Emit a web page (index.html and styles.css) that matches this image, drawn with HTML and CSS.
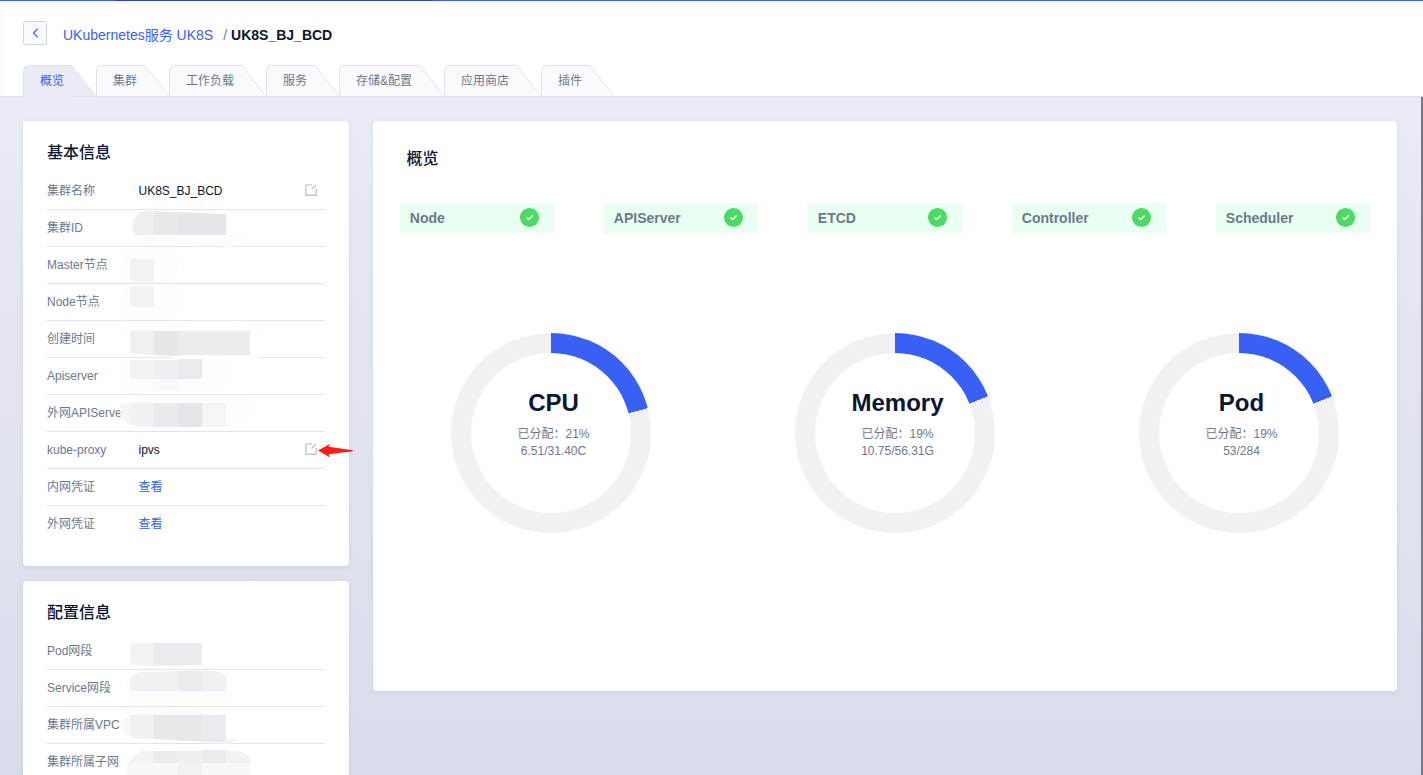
FILE: index.html
```html
<!DOCTYPE html>
<html lang="zh-CN">
<head>
<meta charset="utf-8">
<title>UK8S_BJ_BCD</title>
<link rel="stylesheet" href="styles.css">
</head>
<body>
<svg class="defs" width="0" height="0" aria-hidden="true">
  <symbol id="edit" viewBox="0 0 12 12"><path d="M7 .9H1.4a.6.6 0 0 0-.6.6v9.2a.6.6 0 0 0 .6.6h9.2a.6.6 0 0 0 .6-.6V5M6.6 5.4 11 1" fill="none" stroke="#bfc6d6" stroke-width="1.4"/></symbol>
  <symbol id="ok" viewBox="0 0 19 19"><circle cx="9.5" cy="9.5" r="9.5" fill="#4cd964"/><path d="M6.5 9.5 8.6 11.5 12.7 7.6" fill="none" stroke="#fff" stroke-width="1.4"/></symbol>
  <symbol id="slant" viewBox="0 0 25 32"><path d="M0 .5 24.5 31.5V32H0z" class="slant-fill"/><path d="M0 .5 24.5 31.5" fill="none" stroke="#dfe0f1"/></symbol>
</svg>
<header class="header">
  <div class="topline"></div>
  <div class="crumbs">
    <button class="back" aria-label="返回"><svg width="7" height="10" viewBox="0 0 7 10"><path d="M5.8.7 1.4 5l4.4 4.3" fill="none" stroke="#4468f0" stroke-width="1.2"/></svg></button>
    <a class="crumb-link">UKubernetes服务 UK8S</a><span class="slash">/</span><b class="crumb-now">UK8S_BJ_BCD</b>
  </div>
  <nav class="tabs">
    <a class="tab active"><span>概览</span><svg><use href="#slant"/></svg></a>
    <a class="tab"><span>集群</span><svg><use href="#slant"/></svg></a>
    <a class="tab"><span>工作负载</span><svg><use href="#slant"/></svg></a>
    <a class="tab"><span>服务</span><svg><use href="#slant"/></svg></a>
    <a class="tab"><span>存储&amp;配置</span><svg><use href="#slant"/></svg></a>
    <a class="tab"><span>应用商店</span><svg><use href="#slant"/></svg></a>
    <a class="tab"><span>插件</span><svg><use href="#slant"/></svg></a>
  </nav>
</header>
<main class="content">
  <aside class="side">
    <section class="card info">
      <h2>基本信息</h2>
      <div class="row"><span class="label">集群名称</span><span class="value">UK8S_BJ_BCD</span><svg class="edit"><use href="#edit"/></svg></div>
      <div class="row"><span class="label">集群ID</span>
        <svg class="mask" viewBox="120 210 150 37"><path d="M133 235h111q-2 9-12 12l-80-5q-14-1-19-7z" fill="#fcfcfd"/><path d="M154 211h-9q-9 1-13 14 0 7 4 10h18z" fill="#eeeff1"/><path d="M154 211l24 1v23h-24z" fill="#e8e9eb"/><path d="M178 212l44 2h4v21h-48z" fill="#e5e6ea"/></svg></div>
      <div class="row"><span class="label">Master节点</span>
        <svg class="mask" viewBox="120 247 150 37"><rect x="121" y="251" width="57" height="31" rx="13" fill="#fdfdfe"/><path d="M130 259h24v23h-20l-4-3z" fill="#f1f2f4"/></svg></div>
      <div class="row"><span class="label">Node节点</span>
        <svg class="mask" viewBox="120 284 150 37"><rect x="120" y="285" width="63" height="31" rx="13" fill="#fdfdfe"/><path d="M130 286h24v21h-24z" fill="#f1f2f4"/></svg></div>
      <div class="row"><span class="label">创建时间</span>
        <svg class="mask" viewBox="120 321 150 37"><path d="M119 331q8-8 28-7l90 3q20 1 28 4v4h-15v19l10 4h-85l-45-5V331z" fill="#fdfdfe"/><path d="M130 331h24v24l-24-2z" fill="#eff0f2"/><path d="M154 331h24v25l-24-1z" fill="#e5e7eb"/><path d="M178 331h72v24h-64l-8 1z" fill="#ebecee"/></svg></div>
      <div class="row"><span class="label">Apiserver</span>
        <svg class="mask" viewBox="120 358 150 37"><path d="M130 360q-11 2-13 18 3 13 20 13l65 1 17-3q12-4 12-18-4-13-18-13h-11z" fill="#fdfdfd"/><path d="M130 360h24v19h-24z" fill="#f2f3f5"/><path d="M154 360h24v19h-24z" fill="#eeeff2"/><path d="M178 359h24v20h-24z" fill="#e9ebef"/><path d="M154 379h24v12h-24z" fill="#f9f9fa"/></svg></div>
      <div class="row"><span class="label">外网APIServer</span>
        <svg class="mask" viewBox="120 395 150 37"><path d="M120 405q10-9 30-9h52v3h40q12 2 12 4-2 14-20 24h-90l-20-5z" fill="#fdfdfe"/><path d="M121 403h9v21q-7-3-10-9z" fill="#f4f5f6"/><path d="M130 403h24v24h-12q-8-1-12-4z" fill="#f0f1f3"/><path d="M154 403h24v24h-24z" fill="#e9eaec"/><path d="M178 403h24v24h-24z" fill="#e5e6e9"/><path d="M202 403h24v24h-24z" fill="#f5f5f6"/></svg></div>
      <div class="row"><span class="label">kube-proxy</span><span class="value">ipvs</span><svg class="edit"><use href="#edit"/></svg>
        <svg class="arrow" viewBox="0 0 36 15"><path d="M0 7.6 12.2.8 10.5 3.8 35 7.2v1L10.5 11.2l1.6 3.3z" fill="#ff1c14"/></svg></div>
      <div class="row"><span class="label">内网凭证</span><a class="value link">查看</a></div>
      <div class="row"><span class="label">外网凭证</span><a class="value link">查看</a></div>
    </section>
    <section class="card info config">
      <h2>配置信息</h2>
      <div class="row"><span class="label">Pod网段</span>
        <svg class="mask" viewBox="120 633 150 37"><path d="M130 643h24v23h-13q-7 0-11-4z" fill="#f2f3f5"/><path d="M154 643h48v22l-48 1z" fill="#e9ebef"/></svg></div>
      <div class="row"><span class="label">Service网段</span>
        <svg class="mask" viewBox="120 670 150 37"><rect x="127" y="672" width="105" height="31" rx="14" fill="#fcfcfd"/><path d="M130 691v-13q5-5 13-6l35-1v20z" fill="#f0f1f4"/><path d="M178 671h24v20h-24z" fill="#eaebef"/><path d="M202 671h13q8 2 11 6v14h-24z" fill="#eff0f3"/></svg></div>
      <div class="row"><span class="label">集群所属VPC</span>
        <svg class="mask" viewBox="120 707 150 37"><path d="M122 715q4-7 20-6l84 4 8 2H130z" fill="#fcfcfd"/><path d="M130 715q-7 2-7 12 2 10 11 12z" fill="#f7f8f9"/><path d="M130 715h24v24h-15q-5-1-9-5z" fill="#f0f1f3"/><path d="M154 739h84l-8 5-40-3z" fill="#f3f4f6"/><path d="M154 715h72v24l-2 3-34-1-36-2z" fill="#e7e8ec"/><path d="M202 715h24v24h-24z" fill="#eaebef"/></svg></div>
      <div class="row"><span class="label">集群所属子网</span>
        <svg class="mask" viewBox="120 744 150 37"><path d="M127 781v-15q5-14 18-15h92q11 2 13 11v19z" fill="#f7f8f9"/><path d="M130 763q5-12 15-12h9v12z" fill="#f2f3f5"/><path d="M154 751h24v12h-24z" fill="#eaebef"/><path d="M178 751h24v12h-24z" fill="#eeeff2"/><path d="M202 750h24v13h-24z" fill="#eaebef"/><path d="M226 751h10q9 1 14 7v5h-24z" fill="#f1f2f4"/><path d="M178 763h24v18h-24z" fill="#f1f2f4"/></svg></div>
    </section>
  </aside>
  <section class="card overview">
    <h2>概览</h2>
    <div class="statuses">
      <div class="status"><span>Node</span><svg><use href="#ok"/></svg></div>
      <div class="status"><span>APIServer</span><svg><use href="#ok"/></svg></div>
      <div class="status"><span>ETCD</span><svg><use href="#ok"/></svg></div>
      <div class="status"><span>Controller</span><svg><use href="#ok"/></svg></div>
      <div class="status"><span>Scheduler</span><svg><use href="#ok"/></svg></div>
    </div>
    <div class="rings">
      <div class="ring" style="--p:21%"><div class="hole"><h3>CPU</h3><p>已分配：21%</p><p>6.51/31.40C</p></div></div>
      <div class="ring" style="--p:19%"><div class="hole"><h3>Memory</h3><p>已分配：19%</p><p>10.75/56.31G</p></div></div>
      <div class="ring" style="--p:19%"><div class="hole"><h3>Pod</h3><p>已分配：19%</p><p>53/284</p></div></div>
    </div>
  </section>
</main>
</body>
</html>
```
FILE: styles.css
```css
* { box-sizing: border-box; }
body {
  margin: 0;
  height: 775px;
  overflow: hidden;
  font: 12px/17px "Liberation Sans", "Noto Sans CJK SC", sans-serif;
  color: #6b798e;
  display: flex;
  flex-direction: column;
}
h2, h3, p { margin: 0; }
.defs { position: absolute; }

.header {
  height: 97px;
  flex: none;
  border-bottom: 1px solid #dddff0;
  background: linear-gradient(90deg, #f7f7fe, #fff 4px);
}
.topline {
  height: 1px;
  background: linear-gradient(90deg, #3860f4 115px, #2945b0 115px 433px, #3860f4 433px);
}
.crumbs {
  display: flex;
  align-items: center;
  height: 64px;
  padding: 3px 0 0 23px;
  font-size: 14px;
  line-height: 20px;
}
.back {
  width: 24px;
  height: 24px;
  margin: -4px 16px 0 0;
  padding: 0;
  display: flex;
  align-items: center;
  justify-content: center;
  border: 1px solid #cfd4ec;
  border-radius: 2px;
  background: #fafafe;
}
.crumb-link { color: #3860f4; }
.slash { margin: 0 4px 0 10px; }
.crumb-now { color: #0a1633; }

.tabs { display: flex; padding-left: 23px; height: 32px; }
.tab { display: flex; height: 32px; color: #6b798e; --fill: #fafafc; }
.tab span {
  height: 31px;
  padding: 6px 8px 0 16px;
  line-height: 18px;
  border: 1px solid #dfe0f1;
  border-width: 1px 0 0 1px;
  border-radius: 6px 0 0 0;
  background: var(--fill);
}
.tab svg { width: 24px; height: 31px; overflow: visible; flex: none; }
.slant-fill { fill: var(--fill); }
.tab.active { --fill: #e9ecf5; color: #3860f4; }
.tab.active span, .tab.active svg { height: 32px; }

.content {
  flex: 1;
  min-height: 0;
  overflow: hidden;
  display: flex;
  align-items: flex-start;
  gap: 24px;
  padding: 24px 0 0 23px;
  border-right: 2px solid #777982;
  background: linear-gradient(#e9ecf5, #d9dceb);
}
.side { width: 326px; flex: none; display: flex; flex-direction: column; gap: 15px; }
.card { background: #fff; border-radius: 4px; box-shadow: 0 1px 4px rgba(160, 165, 215, .25); }
.card h2 { font-size: 16px; line-height: 24px; font-weight: 500; color: #0a1633; }
.info { height: 445px; padding: 20px 24px 0; }
.info.config { height: 194px; overflow: hidden; border-radius: 4px 4px 0 0; }
.info h2 { margin-bottom: 8px; }
.row {
  position: relative;
  display: flex;
  align-items: center;
  width: 278px;
  height: 37px;
  padding-top: 1px;
  border-bottom: 1px solid #e0e4ee;
}
.info .row:last-child { border-bottom-color: transparent; }
.label { width: 91.5px; white-space: nowrap; }
.value { color: #0a1633; }
.value.link { color: #3860f4; }
.edit { width: 12px; height: 12px; margin: -3px 8px 0 auto; }
.mask { position: absolute; left: 73px; top: 0; width: 150px; height: 37px; }
.arrow { position: absolute; left: 271px; top: 11px; width: 36px; height: 15px; }

.overview { width: 1024px; height: 570px; flex: none; padding: 26px 27px 0; }
.overview h2 { padding-left: 6.5px; }
.statuses { display: flex; gap: 50px; margin-top: 32px; }
.status {
  width: 154px;
  height: 30px;
  padding: 0 15px 0 9.8px;
  display: flex;
  align-items: center;
  justify-content: space-between;
  background: #ebfef2;
  font-size: 14px;
  font-weight: bold;
}
.status svg { width: 19px; height: 19px; margin-top: -1px; }
.rings { display: flex; gap: 144px; padding-left: 51px; margin-top: 100px; }
.ring {
  width: 200px;
  height: 200px;
  padding: 20px;
  border-radius: 50%;
  background: conic-gradient(#3860f4 var(--p), #f1f1f1 0);
}
.hole {
  height: 160px;
  padding: 35px 0 0 5px;
  border-radius: 50%;
  background: #fff;
  text-align: center;
}
.hole h3 { font-size: 24px; line-height: 30px; margin-bottom: 8px; color: #0a1633; }
```
